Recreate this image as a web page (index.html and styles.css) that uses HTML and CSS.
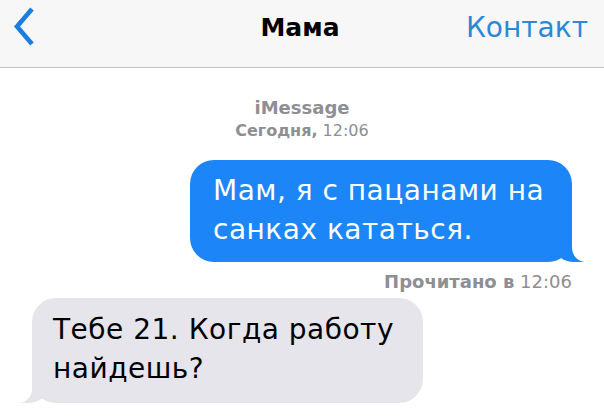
FILE: index.html
```html
<!DOCTYPE html>
<html lang="ru">
<head>
<meta charset="utf-8">
<link rel="stylesheet" href="styles.css">
</head>
<body>
<div class="screen">
  <header class="nav">
    <div class="nav-left">
      <svg class="chevron" width="24" height="40" viewBox="0 0 24 40"><path d="M20 3 L5 20.5 L20 38" fill="none" stroke="#1a7de0" stroke-width="4.6" stroke-linecap="butt" stroke-linejoin="miter"/></svg>
    </div>
    <div class="nav-title">Мама</div>
    <div class="nav-right">Контакт</div>
  </header>
  <main class="thread">
    <div class="meta">
      <div class="meta-service">iMessage</div>
      <div class="meta-date"><b>Сегодня,</b> 12:06</div>
    </div>
    <div class="row row-sent">
      <div class="bubble sent">Мам, я с пацанами на санках кататься.</div>
    </div>
    <div class="status"><b>Прочитано в</b> 12:06</div>
    <div class="row row-recv">
      <div class="bubble recv">Тебе 21. Когда работу найдешь?</div>
    </div>
  </main>
</div>
</body>
</html>
```
FILE: styles.css
```css
* { box-sizing: border-box; }
html, body { margin: 0; padding: 0; background: #ffffff; }
body { font-family: "DejaVu Sans", "Liberation Sans", sans-serif; width: 604px; height: 417px; overflow: hidden; }
.screen { width: 604px; }
.nav {
  height: 68px;
  background: #f7f7f7;
  border-bottom: 1px solid #c4c4c6;
  display: grid;
  grid-template-columns: 1fr auto 1fr;
  align-items: center;
  padding: 0 16px 0 12px;
}
.nav-left { display: flex; align-items: center; padding-bottom: 16px; }
.chevron { display: block; }
.nav-title { font-weight: bold; font-size: 25px; color: #000; padding-bottom: 12px; }
.nav-right { justify-self: end; font-size: 28px; color: #2a89d9; padding-bottom: 12px; }
.thread { display: flex; flex-direction: column; padding: 28px 32px 0 32px; }
.meta { text-align: center; color: #8e8e93; line-height: 23px; margin-bottom: 18px; }
.meta-service { font-weight: bold; font-size: 18px; }
.meta-date { font-size: 16px; }
.meta b { font-weight: bold; }
.row { display: flex; }
.row-sent { justify-content: flex-end; }
.row-recv { justify-content: flex-start; }
.bubble {
  position: relative;
  font-size: 28px;
  letter-spacing: 0.5px;
  line-height: 39px;
  border-radius: 24px;
}
.sent {
  width: 382px;
  background: #1c85f7;
  color: #ffffff;
  padding: 11px 18px 13px 23px;
}
.recv {
  width: 391px;
  background: #e6e5eb;
  color: #000000;
  padding: 12px 18px 15px 21px;
}
.sent::before, .sent::after, .recv::before, .recv::after {
  content: "";
  position: absolute;
  bottom: 0;
  height: 26px;
}
.sent::before { right: -12px; width: 30px; background: #1c85f7; border-bottom-left-radius: 20px 16px; }
.sent::after { right: -34px; width: 34px; background: #ffffff; border-bottom-left-radius: 14px; }
.recv::before { left: -14px; width: 30px; background: #e6e5eb; border-bottom-right-radius: 20px 16px; }
.recv::after { left: -34px; width: 34px; background: #ffffff; border-bottom-right-radius: 14px; }
.status { text-align: right; color: #8e8e93; font-size: 18px; line-height: 22px; margin: 9px 0 5px; }
```
